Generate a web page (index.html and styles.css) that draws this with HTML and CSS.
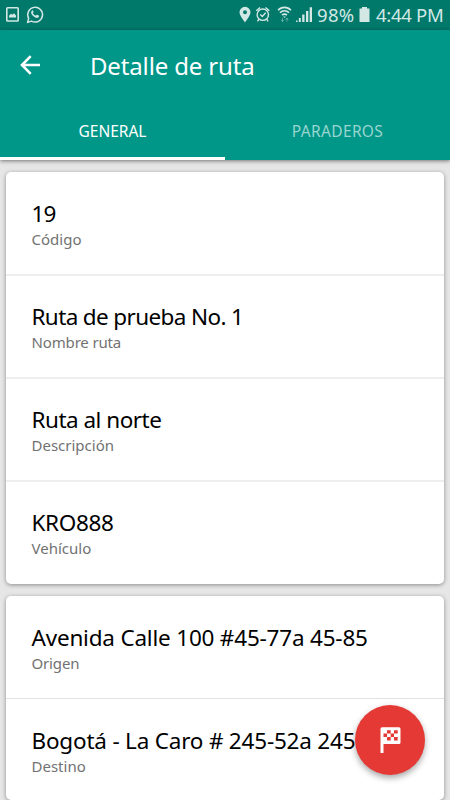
FILE: index.html
```html
<!DOCTYPE html>
<html lang="es">
<head>
<meta charset="utf-8">
<title>Detalle de ruta</title>
<link rel="stylesheet" href="styles.css">
</head>
<body>
<div class="status">
  <svg class="status-left" width="46" height="30" viewBox="0 0 46 30">
    <rect x="6.800" y="7.800" width="11.400" height="13.200" rx="0.800" fill="none" stroke="currentColor" stroke-width="1.600"/>
    <path d="M9 17.400v-1.600l2-2 1.300 1 1.600-1.600 2.100 2.400v1.800z" fill="currentColor"/>
    <path d="M27.600 22.400l1.100-4.100a7.400 7.400 0 1 1 2.800 2.800z" fill="none" stroke="currentColor" stroke-width="1.500" stroke-linejoin="round"/>
    <path d="M32.600 10.300c-2.400 1.300-1.500 3.800.6 5.800 2.100 2 4.700 2.700 5.800.4.200-.5 0-.8-.4-1l-1.500-.8c-.7-.3-.9.9-1.500.9-1 0-2.700-1.700-2.700-2.500 0-.5.9-.8.7-1.300l-.6-1.300c-.1-.2-.3-.3-.4-.2z" fill="currentColor"/>
  </svg>
  <div class="status-right">
    <svg width="76" height="30" viewBox="0 0 76 30">
      <path fill-rule="evenodd" d="M6 6.800a5.500 5.500 0 0 0-5.500 5.500C.5 16 6 22.200 6 22.200s5.500-6.200 5.500-9.900A5.500 5.500 0 0 0 6 6.800zm0 3.500a2 2 0 1 1 0 4 2 2 0 0 1 0-4z" fill="currentColor"/>
      <g fill="none" stroke="currentColor" stroke-width="1.400">
        <circle cx="23.800" cy="14.700" r="5.700"/>
        <path d="M21.300 14.500l2 2 3.400-3.700M17.300 10.800l3.800-3.400M26.500 7.400l3.800 3.400M19.900 19.200l-1.400 2.200M27.700 19.200l1.400 2.200"/>
      </g>
      <g fill="none" stroke="currentColor" stroke-width="1.700">
        <path d="M39.100 10.300a8.500 8.500 0 0 1 12.800 0M41 12.800a6 6 0 0 1 9 0M43.100 15.200a3.300 3.300 0 0 1 4.800 0"/>
      </g>
      <path d="M45.500 18l-1.300-1.500h2.600z" fill="currentColor"/>
      <path d="M43.500 17.800v3.800M42.100 19.800l1.400 1.700 1.400-1.700M48 21.600v-3.600M46.600 19.800l1.400-1.700 1.400 1.700" fill="none" stroke="currentColor" opacity=".4"/>
      <path d="M57 20.500h1.500V22H57zM59.800 18h2v4h-2zM63.200 14.500h2.300V22h-2.300zM67 11h2.300v11H67zM70.700 7.300H73V22h-2.300z" fill="currentColor"/>
    </svg>
    <span class="battery-text">98%</span>
    <svg class="battery" width="12" height="30" viewBox="0 0 12 30"><path d="M3 7h5v1.500h2.500V22H.5V8.500H3z" fill="currentColor"/></svg>
    <span class="clock">4:44 PM</span>
  </div>
</div>
<header class="appbar">
  <div class="toolbar">
    <svg class="back" width="20" height="20" viewBox="0 0 20 20"><path d="M20 10H2.500M10.700 1.200L2 10l8.700 8.800" fill="none" stroke="#fff" stroke-width="2.600"/></svg>
    <h1>Detalle de ruta</h1>
  </div>
  <nav class="tabs">
    <a class="tab active">GENERAL</a>
    <a class="tab wide">PARADEROS</a>
  </nav>
</header>
<main>
  <section class="card summary">
    <div class="row"><div class="value code">19</div><div class="label">Código</div></div>
    <div class="row"><div class="value name">Ruta de prueba No. 1</div><div class="label long">Nombre ruta</div></div>
    <div class="row"><div class="value description">Ruta al norte</div><div class="label">Descripción</div></div>
    <div class="row"><div class="value vehicle">KRO888</div><div class="label">Vehículo</div></div>
  </section>
  <section class="card places">
    <div class="row"><div class="value address">Avenida Calle 100 #45-77a 45-85</div><div class="label long">Origen</div></div>
    <div class="row"><div class="value address">Bogotá - La Caro # 245-52a 245</div><div class="label">Destino</div></div>
  </section>
</main>
<button class="fab" aria-label="Iniciar ruta">
  <svg width="21" height="27" viewBox="0 0 21 27">
    <path fill="#fff" d="M2 .3h17q1.500 0 1.500 1.500v13.700q0 1.500-1.500 1.500H3.500v9H.5V1.800Q.5.300 2 .3z"/>
    <path fill="#e53935" d="M7 3.300h3.700v3.200H7zM14 3.300h3.700v3.200H14zM3.500 6.500H7v3.600H3.500zM10.700 6.500H14v3.600h-3.300zM7 10.100h3.700v3.300H7zM14 10.100h3.700v3.300H14z"/>
  </svg>
</button>
</body>
</html>
```
FILE: styles.css
```css
* { box-sizing: border-box; }
body {
  margin: 0;
  height: 800px;
  overflow: hidden;
  background: #e6e6e6;
  font-family: "Noto Sans", sans-serif;
  color: #000;
}
svg { display: block; flex: none; }
.status {
  height: 30px;
  display: flex;
  justify-content: space-between;
  background: #00796b;
  color: #d3e8e5;
  font-size: 18.5px;
  line-height: 30px;
  white-space: nowrap;
}
.status-right { display: flex; width: 211px; }
.battery-text { width: 40px; margin-left: 2px; letter-spacing: .3px; }
.battery { margin-left: 2px; }
.clock { margin-left: 5px; letter-spacing: -.3px; }
.appbar {
  position: relative;
  height: 130px;
  background: #009688;
  box-shadow: 0 1px 4px rgba(0, 0, 0, .5);
  color: #fff;
}
.toolbar { height: 72px; display: flex; align-items: center; padding-left: 20px; }
.back { margin-bottom: 2px; }
h1 {
  margin: 0 0 0 50px;
  font-size: 24px;
  font-weight: 400;
  line-height: 36px;
  letter-spacing: -.15px;
  white-space: nowrap;
}
.tabs { display: flex; height: 58px; }
.tab {
  flex: 1;
  text-align: center;
  font-size: 15.5px;
  line-height: 58px;
  color: #99d5cf;
}
.tab.active { color: #fff; border-bottom: 3px solid #fff; }
.tab.wide { letter-spacing: .35px; }
main { padding: 12px 6px 0; display: flex; flex-direction: column; gap: 12px; }
.card {
  background: #fff;
  border-radius: 5px;
  box-shadow: 0 1px 4px rgba(0, 0, 0, .4);
}
.row { height: 103px; padding: 26px 25.5px 0; white-space: nowrap; overflow: hidden; }
.row:first-child { height: 102px; padding-top: 27px; }
.summary .row:last-child { height: 104px; }
.summary .row + .row { border-top: 2px solid #eee; }
.places .row:last-child { height: 102px; padding-top: 27px; border-top: 1px solid #e2e2e2; }
.value { font-size: 22.5px; line-height: 30px; }
.code { letter-spacing: -.8px; }
.name { letter-spacing: -.63px; }
.description { letter-spacing: -.5px; }
.vehicle { letter-spacing: -.35px; }
.address { letter-spacing: -.2px; }
.label { font-size: 15px; line-height: 20px; color: #727272; }
.label.long { letter-spacing: -.15px; }
.fab {
  position: absolute;
  left: 355px;
  top: 705px;
  width: 70px;
  height: 70px;
  padding: 0;
  border: 0;
  border-radius: 50%;
  background: #e53935;
  box-shadow: 0 3px 6px rgba(0, 0, 0, .35);
  display: flex;
  align-items: center;
  justify-content: center;
}
```
